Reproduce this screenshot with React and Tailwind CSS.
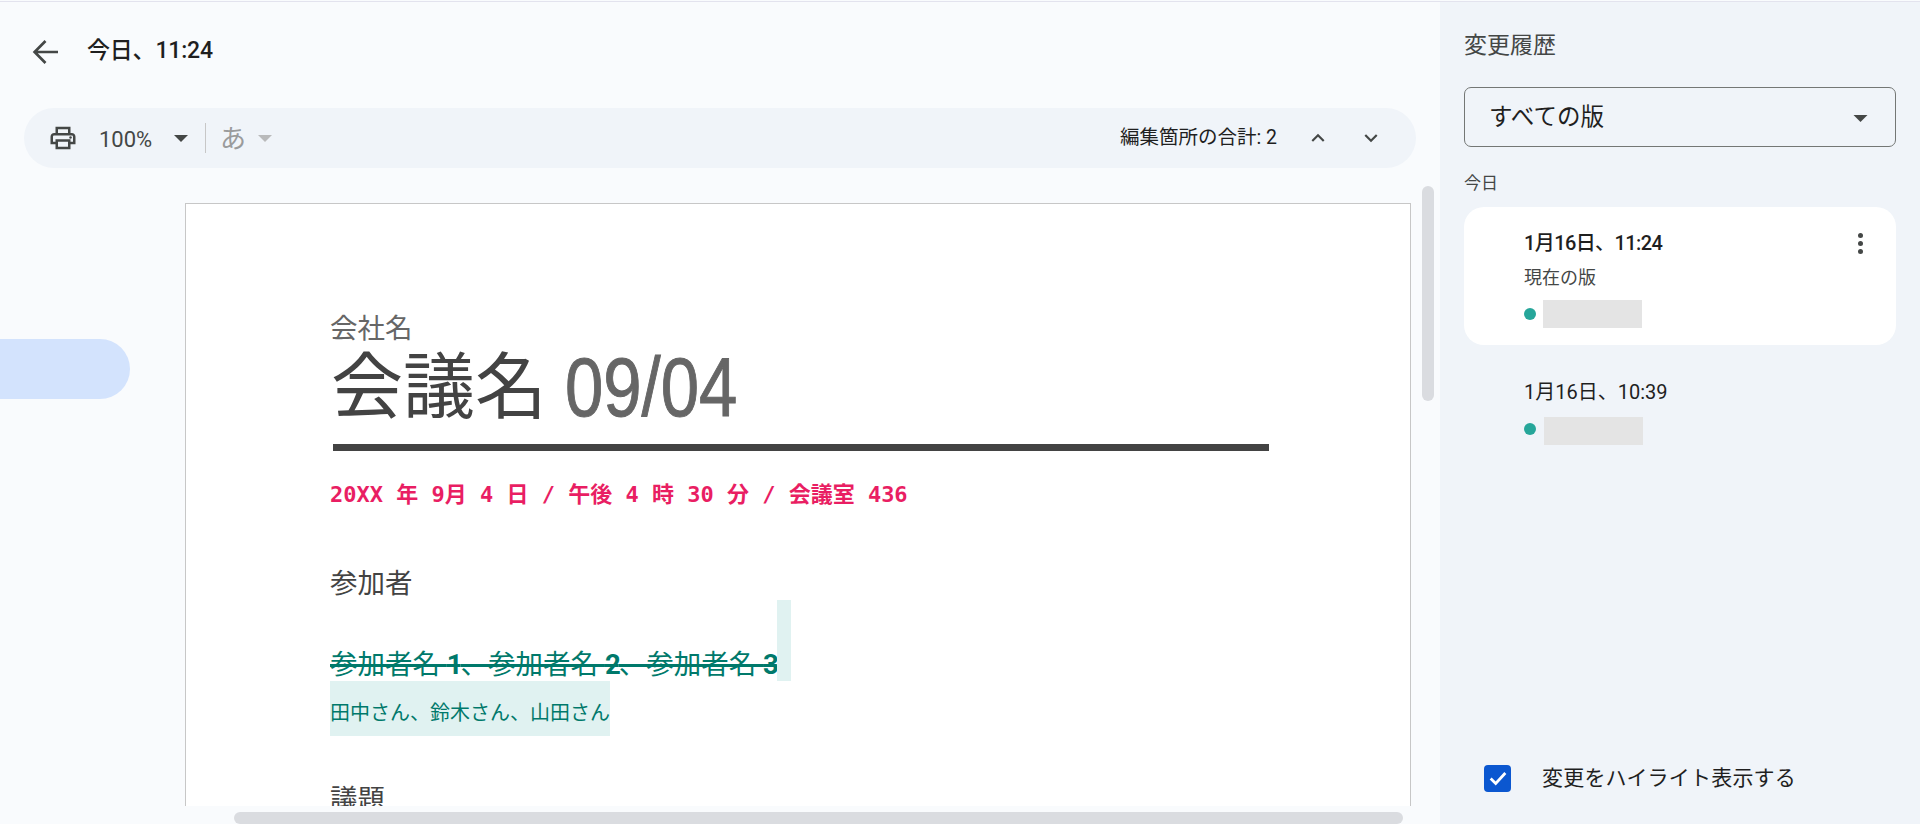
const Caret = ({ className }) => (
  <svg viewBox="0 0 14 7" className={className}>
    <path d="M0 0h14L7 7z" fill="currentColor" />
  </svg>
);

const Toolbar = () => (
  <div className="ml-6 flex h-[60px] w-[1392px] items-center rounded-full bg-[#f0f4f9] text-[#444746]">
    <svg viewBox="0 0 24 24" className="ml-6 h-[30px] w-[30px]" fill="currentColor">
      <path d="M19 8h-1V3H6v5H5c-1.66 0-3 1.34-3 3v6h4v4h12v-4h4v-6c0-1.66-1.34-3-3-3zM8 5h8v3H8V5zm8 12v2H8v-4h8v2zm2-2v-2H6v2H4v-4c0-.55.45-1 1-1h14c.55 0 1 .45 1 1v4h-2z" />
      <circle cx="18" cy="11.5" r="1" />
    </svg>
    <span className="ml-[21px] w-[56px] pt-[2px] text-[22px]">100%</span>
    <Caret className="ml-[19px] h-[7px] w-[14px]" />
    <div className="ml-[17px] h-[30px] w-px bg-[#c7c7c7]" />
    <span className="ml-[14px] pt-[2px] text-[26px] text-[#9a9b9c]">あ</span>
    <Caret className="ml-3 h-[7px] w-[14px] text-[#b9babb]" />
    <span className="ml-auto text-[19.5px] text-[#1f1f1f]">編集箇所の合計: 2</span>
    <svg viewBox="0 0 24 24" className="ml-[28px] h-[26px] w-[26px]" fill="currentColor">
      <path d="M12 8l-6 6 1.41 1.41L12 10.83l4.59 4.58L18 14z" />
    </svg>
    <svg viewBox="0 0 24 24" className="ml-[27px] mr-[32px] h-[26px] w-[26px]" fill="currentColor">
      <path d="M16.59 8.59L12 13.17 7.41 8.59 6 10l6 6 6-6z" />
    </svg>
  </div>
);

const DocPage = () => (
  <div className="h-[760px] w-[1226px] shrink-0 border border-[#c7c7c7] bg-white pl-[144px] pt-[107px] text-[#434343]">
    <div className="h-[36px] text-[27.5px] leading-[36px] text-[#666666]">会社名</div>
    <div className="flex h-[81px] items-center pl-[1px] text-[72px] leading-[81px]">
      <span>会議名</span>
      <span className="ml-[18px] origin-left scale-x-[0.82] font-['Liberation_Sans',sans-serif] text-[84px] text-[#666666] [-webkit-text-stroke:1px_#666666]">09/04</span>
    </div>
    <div className="ml-[3px] mt-4 h-[7px] w-[936px] bg-[#434343]" />
    <div className="mt-[29px] h-[30px] whitespace-pre font-['DejaVu_Sans_Mono','Noto_Sans_CJK_JP',monospace] text-[22px] font-bold leading-[30px] text-[#e91e63]">
      20XX 年 9月 4 日 / 午後 4 時 30 分 / 会議室 436
    </div>
    <div className="mt-[56px] h-[34px] text-[27.5px] leading-[36px]">参加者</div>
    <div className="flex h-[81px] items-end">
      <span className="text-[27.5px] leading-[32px] text-[#00796b] line-through decoration-[3px]">
        参加者名 <b className="tracking-[-2px]">1</b>、参加者名 <b className="tracking-[-2px]">2</b>、参加者名 <b className="tracking-[-2px]">3</b>
      </span>
      <div className="h-full w-[14px] bg-[#e0f2f1]" />
    </div>
    <div className="h-[55px] w-[280px] bg-[#e0f2f1] pt-[16px] text-[20px] leading-[32px] text-[#00796b]">田中さん、鈴木さん、山田さん</div>
    <div className="mt-[46px] h-[36px] text-[27.5px] leading-[36px]">議題</div>
  </div>
);

const VersionCard = ({ time, current, active, barClass }) => (
  <div className={active ? 'relative h-[138px] rounded-[20px] bg-white pl-[60px] pt-[22px]' : 'relative h-[126px] pl-[60px] pt-[33px]'}>
    <div className={active ? 'text-[20px] font-medium leading-[28px] tracking-[-0.6px] text-[#1f1f1f]' : 'text-[20px] leading-[28px] text-[#1f1f1f]'}>{time}</div>
    {current && <div className="mt-[9px] text-[18px] leading-[24px] text-[#444746]">{current}</div>}
    <div className={active ? 'mt-[10px] flex items-center' : 'mt-[11px] flex items-center'}>
      <span className={active ? 'h-3 w-3 rounded-full bg-[#26a69a]' : 'h-3 w-3 -translate-y-[2px] rounded-full bg-[#26a69a]'} />
      <span className={barClass} />
    </div>
    {active && (
      <div className="absolute right-[33px] top-[26px] flex flex-col gap-[3px]">
        <span className="h-[5px] w-[5px] rounded-full bg-[#444746]" />
        <span className="h-[5px] w-[5px] rounded-full bg-[#444746]" />
        <span className="h-[5px] w-[5px] rounded-full bg-[#444746]" />
      </div>
    )}
  </div>
);

export default function App() {
  return (
    <div className="flex h-[824px] w-[1920px] flex-col overflow-hidden bg-[#f9fbfd] font-['Roboto','Noto_Sans_CJK_JP',sans-serif]">
      <div className="mt-px h-px shrink-0 bg-[#e3e3ee]" />
      <div className="flex min-h-0 flex-1">
        <main className="flex w-[1440px] shrink-0 flex-col">
          <header className="flex h-[106px] items-center pb-[6px] pl-[31px]">
            <svg viewBox="0 0 30 30" className="h-[30px] w-[30px] text-[#444746]" fill="none" stroke="currentColor" strokeWidth="2.7">
              <path d="M27 15H4M14.5 4 3.6 15l10.9 11" />
            </svg>
            <h1 className="-mt-[2px] ml-[26px] text-[23px] font-medium tracking-[-0.2px] text-[#1f1f1f]">今日、11:24</h1>
          </header>
          <Toolbar />
          <div className="relative min-h-0 flex-1">
            <div className="flex h-[638px] overflow-hidden pt-[35px]">
              <div className="w-[185px] shrink-0 pt-[136px]">
                <div className="h-[60px] w-[130px] rounded-r-full bg-[#d3e3fd]" />
              </div>
              <DocPage />
            </div>
            <div className="absolute left-[1422px] top-[18px] h-[215px] w-[12px] rounded-full bg-[#dadce0]" />
            <div className="absolute bottom-0 left-[234px] h-[12px] w-[1169px] rounded-full bg-[#dadce0]" />
          </div>
        </main>
        <aside className="flex w-[480px] shrink-0 flex-col bg-[#f0f4f9] px-6">
          <h2 className="mt-[27px] text-[23px] leading-[34px] text-[#444746]">変更履歴</h2>
          <div className="mt-[24px] flex h-[60px] items-center rounded-[7px] border border-[#747775] pl-[24px] pr-[27px] pt-[2px] text-[23.5px] text-[#1f1f1f]">
            すべての版
            <Caret className="ml-auto h-[7px] w-[15px] text-[#444746]" />
          </div>
          <div className="mt-[24px] text-[17px] leading-[24px] text-[#444746]">今日</div>
          <div className="mt-[12px]">
            <VersionCard active time="1月16日、11:24" current="現在の版" barClass="ml-[7px] h-[28px] w-[99px] bg-[#e4e4e4]" />
            <VersionCard time="1月16日、10:39" barClass="ml-[8px] h-[28px] w-[99px] bg-[#e4e4e4]" />
          </div>
          <label className="mb-[30px] ml-[20px] mt-auto flex items-center">
            <span className="flex h-[27px] w-[27px] items-center justify-center rounded-[4px] bg-[#0b57d0]">
              <svg viewBox="0 0 24 24" className="h-[22px] w-[22px]" fill="none" stroke="white" strokeWidth="3">
                <path d="M4 12.5 9.5 18 20 6.5" />
              </svg>
            </span>
            <span className="ml-[31px] text-[21px] tracking-[0.2px] text-[#1f1f1f]">変更をハイライト表示する</span>
          </label>
        </aside>
      </div>
    </div>
  );
}
